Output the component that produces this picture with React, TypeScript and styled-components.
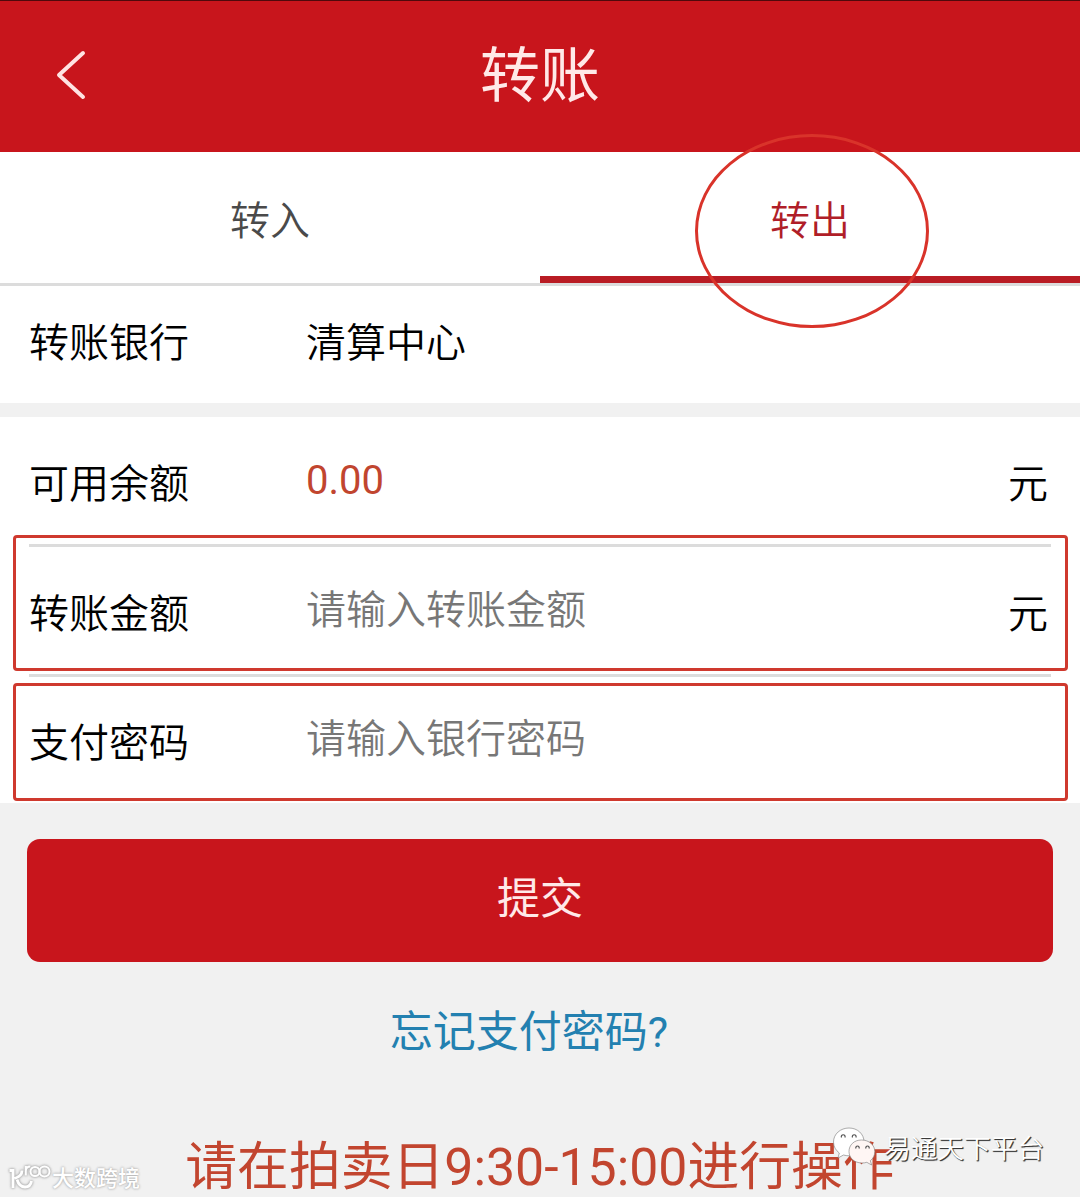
import React from "react";
import styled, { createGlobalStyle } from "styled-components";

const Global = createGlobalStyle`
  * { box-sizing: border-box; }
  body {
    margin: 0;
    background: #f1f1f1;
    font-family: Roboto, "Noto Sans CJK SC", sans-serif;
    color: #000;
  }
`;

const Screen = styled.main`
  position: relative;
  width: 1080px;
  height: 1197px;
  overflow: hidden;
  display: flex;
  flex-direction: column;
  background: #f1f1f1;
`;

const Header = styled.header`
  height: 152px;
  flex: none;
  display: grid;
  grid-template-columns: 140px 1fr 140px;
  align-items: center;
  background: #c8151c;
  border-top: 1px solid #4f090c;
`;

const BackButton = styled.button`
  border: 0;
  padding: 0 0 4px 55px;
  background: none;
  display: flex;
`;

const Title = styled.h1`
  margin: 0;
  font-size: 60px;
  line-height: 151px;
  height: 151px;
  font-weight: 400;
  text-align: center;
  color: #ffe9e8;
`;

const Tabs = styled.nav`
  height: 134px;
  flex: none;
  display: grid;
  grid-template-columns: 1fr 1fr;
  background: #fff;
  border-bottom: 3px solid #dcdcdc;
`;

const Tab = styled.div<{ $active?: boolean }>`
  height: 131px;
  text-align: center;
  font-size: 40px;
  font-weight: 350;
  line-height: 140px;
  color: ${(p) => (p.$active ? "#b01e28" : "#4a4a4a")};
  border-bottom: ${(p) => (p.$active ? "7px solid #b91c24" : "0")};
`;

const Panel = styled.section<{ $gap?: number }>`
  flex: none;
  padding: 0 29px;
  background: #fff;
  margin-bottom: ${(p) => p.$gap ?? 0}px;
`;

const Row = styled.div<{ $height: number; $line?: boolean }>`
  height: ${(p) => p.$height}px;
  display: flex;
  align-items: flex-start;
  font-size: 40px;
  font-weight: 350;
  border-bottom: ${(p) => (p.$line ? "3px solid #dcdcdc" : "0")};
`;

const Label = styled.label<{ $line: number }>`
  width: 277px;
  flex: none;
  line-height: ${(p) => p.$line}px;
`;

const Value = styled.span<{ $line: number; $accent?: boolean }>`
  flex: 1;
  line-height: ${(p) => p.$line}px;
  font-weight: ${(p) => (p.$accent ? 400 : "inherit")};
  color: ${(p) => (p.$accent ? "#c1452f" : "#000")};
`;

const Field = styled.input<{ $height?: number }>`
  flex: 1;
  min-width: 0;
  height: ${(p) => p.$height ?? 126}px;
  padding: 0;
  border: 0;
  outline: 0;
  background: none;
  font: inherit;
  &::placeholder { color: #777; opacity: 1; }
`;

const Unit = styled.span`
  padding-right: 3px;
  line-height: 136px;
`;

const Submit = styled.button`
  flex: none;
  height: 123px;
  margin: 36px 27px 0;
  padding: 0 0 11px;
  border: 0;
  border-radius: 13px;
  background: #c8151c;
  color: #ffe9e8;
  font-family: inherit;
  font-size: 43px;
`;

const Forgot = styled.a`
  margin-top: 44px;
  padding-right: 22px;
  text-align: center;
  font-size: 43px;
  line-height: 52px;
  color: #2380b0;
`;

const Notice = styled.p`
  margin: 83px 0 0;
  text-align: center;
  white-space: nowrap;
  font-size: 51.8px;
  line-height: 54px;
  color: #c2452f;
`;

const Mark = styled.div<{ $x: number; $y: number; $w: number; $h: number; $round?: boolean }>`
  position: absolute;
  left: ${(p) => p.$x}px;
  top: ${(p) => p.$y}px;
  width: ${(p) => p.$w}px;
  height: ${(p) => p.$h}px;
  border: 3px solid ${(p) => (p.$round ? "#d9332a" : "#cf392e")};
  border-radius: ${(p) => (p.$round ? "50%" : "4px")};
  pointer-events: none;
`;

const Account = styled.div`
  position: absolute;
  left: 832px;
  top: 1126px;
  display: flex;
  align-items: flex-start;
  gap: 7px;
  font-size: 26.7px;
  font-weight: 350;
  line-height: 47px;
  white-space: nowrap;
  color: #fff;
  text-shadow: 1px 1px 1px #333, 1px 1px 0 #666;
`;

const Source = styled.div`
  position: absolute;
  left: 8px;
  top: 1158px;
  display: flex;
  align-items: center;
  font-size: 22px;
  line-height: 41px;
  font-weight: 500;
  white-space: nowrap;
  color: #fff;
  text-shadow: 0 0 2px #aaa, 0 0 3px #bbb;
`;

const Logo = styled.svg`
  display: block;
  filter: drop-shadow(0 0 1px #aaa) drop-shadow(0 0 1px #bbb);
`;

export default function App() {
  return (
    <Screen>
      <Global />
      <Header>
        <BackButton aria-label="返回">
          <svg width="32" height="50" viewBox="0 0 32 50" fill="none" stroke="#ffe3e2" strokeWidth="4" strokeLinecap="round" strokeLinejoin="round">
            <path d="M28 3 4 25l24 22" />
          </svg>
        </BackButton>
        <Title>转账</Title>
      </Header>
      <Tabs>
        <Tab>转入</Tab>
        <Tab $active>转出</Tab>
      </Tabs>
      <Panel $gap={14}>
        <Row $height={117}>
          <Label $line={116}>转账银行</Label>
          <Value $line={116}>清算中心</Value>
        </Row>
      </Panel>
      <Panel>
        <Row $height={130} $line>
          <Label $line={136}>可用余额</Label>
          <Value $line={128} $accent>0.00</Value>
          <Unit>元</Unit>
        </Row>
        <Row $height={130} $line>
          <Label $line={136} htmlFor="amount">转账金额</Label>
          <Field id="amount" placeholder="请输入转账金额" />
          <Unit>元</Unit>
        </Row>
        <Row $height={126}>
          <Label $line={134} htmlFor="password">支付密码</Label>
          <Field id="password" type="password" $height={124} placeholder="请输入银行密码" />
        </Row>
      </Panel>
      <Submit>提交</Submit>
      <Forgot>忘记支付密码?</Forgot>
      <Notice>请在拍卖日9:30-15:00进行操作</Notice>

      <Mark $x={695} $y={134} $w={234} $h={194} $round />
      <Mark $x={13} $y={535} $w={1055} $h={136} />
      <Mark $x={13} $y={683} $w={1055} $h={118} />

      <Account>
        <svg width="45" height="42" viewBox="0 0 45 42" stroke="#777" strokeWidth="0.6">
          <path fill="#fff" d="M17 2C8.500 2 1.500 8 1.500 16c0 4.500 2.200 8.300 5.800 11L6 32l5.500-3c1.800.5 3.600.8 5.500.8 8.500 0 15-6.200 15-14S25.500 2 17 2Z" />
          <path fill="#fff6f4" d="M29.500 14C22 14 17 19 17 25.500S22.500 37 30 37c1.700 0 3.300-.2 4.800-.7l4.800 2.700-1.300-4.300c3-2.200 4.500-5.500 4.500-9.200C42.800 19 37 14 29.500 14Z" />
          <path fill="none" stroke="#555" strokeWidth="1.200" d="M9.500 11.500a1.900 1.900 0 1 1 3.400 0M20.500 11.500a1.900 1.900 0 1 1 3.400 0M24 22.500a1.700 1.700 0 1 1 3 0M34 22.500a1.700 1.700 0 1 1 3 0" />
        </svg>
        <span>易通天下平台</span>
      </Account>
      <Source>
        <Logo width="44" height="38" viewBox="0 0 44 38" fill="none" stroke="#fff">
          <path strokeWidth="2.800" d="M1.500 10.500H5V28M14 10.500c0 4-2.500 6.500-7.500 8M9 19.500c1.500 5 4 7.500 8 7.500s6-2.500 6.500-6" />
          <path strokeWidth="2" d="M17.800 6v9.500M17.800 11c0-3 1.500-4.500 4.500-4.500" />
          <circle cx="27" cy="11.500" r="4.500" strokeWidth="2" />
          <circle cx="36.500" cy="11.500" r="5" strokeWidth="2" />
        </Logo>
        <span>大数跨境</span>
      </Source>
    </Screen>
  );
}
